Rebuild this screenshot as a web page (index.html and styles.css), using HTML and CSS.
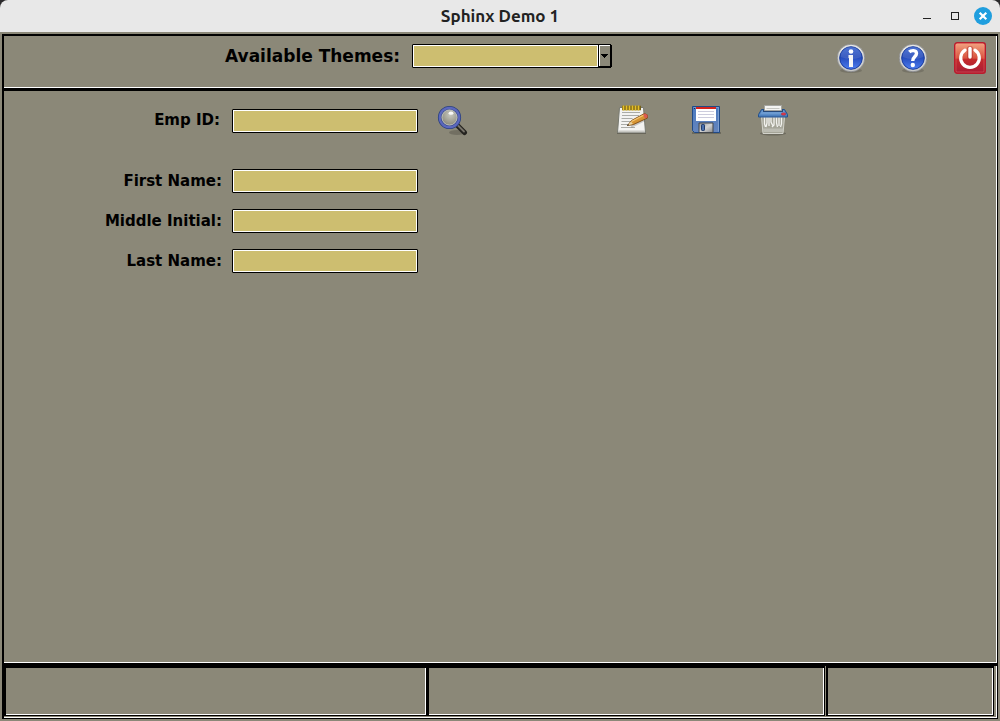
FILE: index.html
```html
<!DOCTYPE html>
<html lang="en">
<head>
<meta charset="utf-8">
<title>Sphinx Demo 1</title>
<link rel="stylesheet" href="styles.css">
</head>
<body>
<div class="window">
  <header class="titlebar">
    <h1 class="title">Sphinx Demo 1</h1>
    <div class="controls">
      <button class="control" type="button" aria-label="Minimize"><svg width="18" height="18"><path d="M5 11.5h8" stroke="#222" fill="none"/></svg></button>
      <button class="control" type="button" aria-label="Maximize"><svg width="18" height="18"><rect x="5.500" y="5.500" width="7" height="7" stroke="#222" fill="none"/></svg></button>
      <button class="control" type="button" aria-label="Close"><svg width="18" height="18"><circle cx="9" cy="9" r="9" fill="#1f9ede"/><path d="M5.700 5.700l6.600 6.600M12.300 5.700l-6.600 6.600" stroke="#fff" stroke-width="2.200"/></svg></button>
    </div>
  </header>

  <div class="app">
    <section class="panel themes">
      <label class="themes-label" for="theme">Available Themes:</label>
      <div class="combo">
        <select class="combo-select" id="theme"><option></option></select>
        <svg class="combo-arrow" width="14" height="24"><path d="M0 0h13v1h1v22h-1v1H0z" fill="#000"/><path d="M1 1h11v1H2v20H1z" fill="#fff"/><path d="M2 2h10v20H2z" fill="#8b8878"/><path d="M3 10h7v1H9v1H8v1H7v1H6v-1H5v-1H4v-1H3z" fill="#000"/></svg>
      </div>
      <div class="app-actions">
        <button class="icon-button" type="button" aria-label="Information">
          <svg width="32" height="32" viewBox="0 0 32 32">
            <defs><linearGradient id="blue" x2="0" y2="1"><stop offset="0" stop-color="#3561cf"/><stop offset=".45" stop-color="#2349b9"/><stop offset="1" stop-color="#4d7df0"/></linearGradient>
            <linearGradient id="rim" x2="0" y2="1"><stop offset="0" stop-color="#e9e9e6"/><stop offset="1" stop-color="#c4c5c4"/></linearGradient></defs>
            <ellipse cx="16" cy="28.500" rx="11" ry="2.500" fill="#000" opacity=".15"/>
            <circle cx="16" cy="16" r="13.800" fill="url(#rim)" stroke="#85878a" stroke-width=".8"/><circle cx="16" cy="16" r="11.300" fill="url(#blue)" stroke="#1a3c9f"/>
            <path d="M5.500 15a10.500 10.500 0 0 1 21 0q-10 4-21 0z" fill="#fff" opacity=".12"/>
            <circle cx="16" cy="9.500" r="2.300" fill="#fff"/><path d="M13.500 13H18v12h-4V16h-.5z" fill="#f6f6f6"/>
          </svg>
        </button>
        <button class="icon-button" type="button" aria-label="Help">
          <svg width="32" height="32" viewBox="0 0 32 32">
            <ellipse cx="16" cy="28.500" rx="11" ry="2.500" fill="#000" opacity=".15"/>
            <circle cx="16" cy="16" r="13.800" fill="url(#rim)" stroke="#85878a" stroke-width=".8"/><circle cx="16" cy="16" r="11.300" fill="url(#blue)" stroke="#1a3c9f"/>
            <path d="M5.500 15a10.500 10.500 0 0 1 21 0q-10 4-21 0z" fill="#fff" opacity=".12"/>
            <path d="M12.300 10C14 8.200 19.500 7.600 19.500 11.500C19.500 14.500 15.700 14.500 15.700 19" fill="none" stroke="#fff" stroke-width="3.400"/><circle cx="15.800" cy="23" r="2.200" fill="#fff"/>
          </svg>
        </button>
        <button class="icon-button exit" type="button" aria-label="Exit">
          <svg width="32" height="32" viewBox="0 0 32 32">
            <defs><linearGradient id="red" x2="0" y2="1"><stop offset="0" stop-color="#f2a582"/><stop offset=".5" stop-color="#d9533f"/><stop offset=".55" stop-color="#c42a2c"/><stop offset="1" stop-color="#a81c36"/></linearGradient></defs>
            <rect x=".7" y=".7" width="30.600" height="30.600" rx="2.500" fill="url(#red)" stroke="#b91c2d" stroke-width="1.400"/>
            <rect x="2" y="2" width="28" height="28" rx="1" fill="none" stroke="#ff9c83" opacity=".3"/>
            <path d="M11 8.200a9.300 9.300 0 1 0 10 0" fill="none" stroke="#fff" stroke-width="3.200" stroke-linecap="round"/><path d="M16 7v8" stroke="#b12a2a" stroke-width="6" stroke-linecap="round" opacity=".5"/><path d="M16 6.500v8.500" stroke="#fff" stroke-width="3.400" stroke-linecap="round"/>
          </svg>
        </button>
      </div>
    </section>

    <main class="panel record">
      <div class="row row-id">
        <label class="field-label id-label" for="emp">Emp ID:</label>
        <input class="entry" id="emp" type="text">
        <button class="icon-button find" type="button" aria-label="Search">
          <svg width="32" height="32" viewBox="0 0 32 32">
            <defs><radialGradient id="lens" cx=".55" cy=".35"><stop offset="0" stop-color="#c8c9c0"/><stop offset="1" stop-color="#918f81"/></radialGradient></defs>
            <ellipse cx="21" cy="28.500" rx="8" ry="2.500" fill="#000" opacity=".18"/>
            <path d="M21 21L28.500 28.500" stroke="#24231f" stroke-width="5" stroke-linecap="round"/><path d="M21 20.500L28 27.500" stroke="#77736a" stroke-width="1.800" stroke-linecap="round"/>
            <circle cx="13.500" cy="13.500" r="9.700" fill="url(#lens)" stroke="#2b4080" stroke-width="3.800"/><circle cx="13.500" cy="13.500" r="9.700" fill="none" stroke="#5c68bd" stroke-width="2.200"/><circle cx="13.500" cy="13.500" r="7.600" fill="none" stroke="#c3c4c0" stroke-width=".9"/>
            <ellipse cx="15" cy="9.200" rx="2.400" ry="1.600" fill="#fff" opacity=".9"/>
          </svg>
        </button>
        <div class="record-actions">
          <button class="icon-button" type="button" aria-label="Edit">
            <svg width="32" height="32" viewBox="0 0 32 32">
              <path d="M1 28h29v2H1z" fill="#000" opacity=".25"/>
              <path d="M3.500 3.500h24L29.500 28.500h-28z" fill="#f3f3f1" stroke="#777970"/><path d="M2 26.500h27v2H2z" fill="#c9c9c4"/>
              <path d="M6 8.500h18M6 11.500h17M5.500 14.500h11M5.500 17.500h14M5 20.500h9M5 23.500h14" stroke="#aaaba7" stroke-width="1"/>
              <path d="M6 4h19" stroke="#766019" stroke-width="4.500"/><path d="M7.500 1.500v5M10.500 1.500v5M13.500 1.500v5M16.500 1.500v5M19.500 1.500v5M22.500 1.500v5" stroke="#e5bf27" stroke-width="1.700"/>
              <path d="M15 22.500L28 16" stroke="#000" stroke-width="3" opacity=".18"/>
              <path d="M11.500 21.500l4-5L28.500 9.500l3 1.500v3L17.500 20.500z" fill="#d69432" stroke="#794713" stroke-width=".9"/><path d="M15.500 17.500L28 11" stroke="#f5c774" stroke-width="1.300"/><path d="M27 10.500l2-1 2.500 1.500v2.500l-2.500 1z" fill="#d95b51"/><path d="M11.500 21.500l3.500-4 2 2.500z" fill="#ead4a2"/><path d="M11 22l1-2 1 1z" fill="#222"/>
            </svg>
          </button>
          <button class="icon-button save" type="button" aria-label="Save">
            <svg width="32" height="32" viewBox="0 0 32 32">
              <defs><linearGradient id="disk" x2="0" y2="1"><stop offset="0" stop-color="#4b7ac0"/><stop offset="1" stop-color="#6585bd"/></linearGradient><linearGradient id="metal" x2="1" y2="1"><stop offset="0" stop-color="#969696"/><stop offset=".5" stop-color="#d3d3d3"/><stop offset="1" stop-color="#888"/></linearGradient></defs>
              <path d="M2 28h29v2H2z" fill="#000" opacity=".22"/>
              <path d="M2.500 2.500h27v26H4.500l-2-2z" fill="url(#disk)" stroke="#204a87"/><path d="M3.500 3.500h25v24" fill="none" stroke="#91b0db" opacity=".6"/>
              <path d="M6 5h20v12H6z" fill="#fff"/><path d="M6 3h20v2H6z" fill="#d5241d"/><path d="M8 7.500h16M8 10.500h16M8 13.500h16" stroke="#ccd"/>
              <path d="M9 19h14v9.500H9z" fill="url(#metal)" stroke="#44474b"/><rect x="11.500" y="20.500" width="3" height="6" rx=".7" fill="#4b70ae" stroke="#213c6c"/>
              <path d="M4 4h1v1H4z" fill="#132c54"/>
            </svg>
          </button>
          <button class="icon-button shred" type="button" aria-label="Delete">
            <svg width="32" height="32" viewBox="0 0 32 32">
              <ellipse cx="16" cy="29.500" rx="13" ry="2" fill="#000" opacity=".22"/>
              <path d="M4.500 13h23l-1.500 16.500H6z" fill="#a5a598" stroke="#d2d2ca"/><path d="M6 24.500h20V28H6.500z" fill="#bcbcb2"/>
              <path d="M7.500 13v7l1 3M10 13v6l-1 4M12 13v9M14 13v5l2 4M17 13v8l-2 2M19.500 13v6l1 4M22 13v9M24.500 13v7l-1 3" fill="none" stroke="#f3f3ef" stroke-width="1.300"/>
              <path d="M4.500 5.500h23l3 5v2.500h-29v-2.500z" fill="#4d80be" stroke="#24508b"/><path d="M5 6.500h22l2 4H3z" fill="#6c9bd1"/>
              <path d="M6 6h20v2H6z" fill="#264877"/><path d="M7.500 1.500h17v5h-17z" fill="#f4f4f2" stroke="#a5a5a0"/><path d="M9.500 4.500h13" stroke="#c7c7c3"/>
              <rect x="24.500" y="9" width="4" height="2" rx="1" fill="#ef4450" stroke="#b51d31" stroke-width=".7"/>
            </svg>
          </button>
        </div>
      </div>
      <div class="row"><label class="field-label" for="first">First Name:</label><input class="entry" id="first" type="text"></div>
      <div class="row"><label class="field-label" for="middle">Middle Initial:</label><input class="entry" id="middle" type="text"></div>
      <div class="row"><label class="field-label" for="last">Last Name:</label><input class="entry" id="last" type="text"></div>
    </main>

    <footer class="panel status">
      <div class="panel status-message"></div>
      <div class="panel status-detail"></div>
      <div class="panel status-end"></div>
    </footer>
  </div>
</div>
</body>
</html>
```
FILE: styles.css
```css
* {
  box-sizing: border-box;
}

body {
  margin: 0;
  background: #2b2a2c;
  color: #000;
  font-family: "DejaVu Sans", sans-serif;
}

.window {
  display: flex;
  flex-direction: column;
  min-height: 100vh;
}

.titlebar {
  display: grid;
  grid-template-columns: 1fr auto 1fr;
  align-items: center;
  height: 32px;
  padding: 0 8px;
  border-radius: 8px 8px 0 0;
  background: #e8e8e8;
}

.title {
  grid-column: 2;
  margin: 0;
  color: #222;
  font: 600 17px/24px Ubuntu, "Noto Sans", sans-serif;
}

.controls {
  display: flex;
  justify-content: flex-end;
  gap: 10px;
}

.control,
.icon-button {
  flex: none;
  padding: 0;
  border: 0;
  background: none;
}

.control svg,
.icon-button svg {
  display: block;
}

.app {
  display: flex;
  flex: 1;
  flex-direction: column;
  padding: 2px;
  background: #8b8878;
}

.panel {
  border: solid #000;
  border-width: 2px 1px 1px 2px;
  box-shadow: inset -1px -1px #fff;
}

.themes {
  display: flex;
  align-items: flex-start;
  height: 55px;
  padding: 6px 11px 0 221px;
}

.themes-label {
  width: 187px;
  padding-top: 4px;
  font-size: 17px;
  font-weight: bold;
  line-height: 20px;
}

.combo {
  position: relative;
  flex: none;
  width: 200px;
  height: 24px;
  margin-top: 2px;
}

.combo-select,
.entry {
  appearance: none;
  display: block;
  height: 24px;
  padding: 0 4px;
  border: 1px solid #000;
  border-radius: 1px;
  background: #cdbe70;
  box-shadow: inset 0 0 0 1px #fff;
  font: 14px/20px "DejaVu Sans", sans-serif;
}

.combo-select {
  width: 187px;
}

.combo-arrow {
  position: absolute;
  top: 0;
  right: 0;
  pointer-events: none;
}

.app-actions {
  display: flex;
  gap: 30px;
  margin-left: auto;
}

.exit {
  margin-left: -5px;
}

.record {
  display: flex;
  flex: 1;
  flex-direction: column;
  gap: 16px;
  padding: 13px 20px 20px 88px;
}

.row {
  display: flex;
  align-items: center;
}

.row-id {
  align-items: flex-start;
  height: 34px;
  margin-bottom: 15px;
}

.field-label {
  flex: none;
  width: 130px;
  font-size: 15px;
  font-weight: bold;
  line-height: 20px;
  text-align: right;
}

.id-label {
  padding: 6px 2px 0 0;
}

.entry {
  flex: none;
  width: 186px;
  margin-left: 10px;
}

.row-id .entry {
  margin-top: 5px;
}

.find {
  margin-left: 18px;
}

.record-actions {
  display: flex;
  margin-left: 148px;
}

.save {
  margin-left: 42px;
}

.shred {
  margin-left: 35px;
}

.status {
  display: grid;
  grid-template-columns: 423fr 398fr 169fr;
  height: 55px;
  padding: 0 3px 2px 0;
}

.status-end {
  margin-left: 1px;
}
```
